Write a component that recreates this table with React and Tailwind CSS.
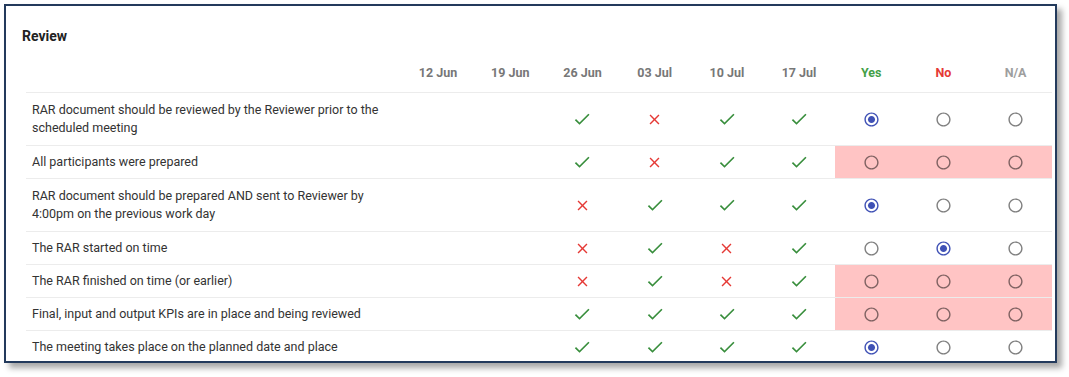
import React from 'react'

const dates = ['12 Jun', '19 Jun', '26 Jun', '03 Jul', '10 Jul', '17 Jul']

// marks: null = empty, true = check, false = cross
const rows = [
  { text: ['RAR document should be reviewed by the Reviewer prior to the', 'scheduled meeting'], marks: [null, null, true, false, true, true], answer: 'yes' },
  { text: ['All participants were prepared'], marks: [null, null, true, false, true, true], answer: null },
  { text: ['RAR document should be prepared AND sent to Reviewer by', '4:00pm on the previous work day'], marks: [null, null, false, true, true, true], answer: 'yes' },
  { text: ['The RAR started on time'], marks: [null, null, false, true, false, true], answer: 'no' },
  { text: ['The RAR finished on time (or earlier)'], marks: [null, null, false, true, false, true], answer: null },
  { text: ['Final, input and output KPIs are in place and being reviewed'], marks: [null, null, true, true, true, true], answer: null },
  { text: ['The meeting takes place on the planned date and place'], marks: [null, null, true, true, true, true], answer: 'yes' },
]

function Check() {
  return (
    <svg width="20" height="20" viewBox="0 0 24 24" className="fill-[#388e3c]">
      <path d="M9 16.17L4.83 12l-1.42 1.41L9 19 21 7l-1.41-1.41z" />
    </svg>
  )
}

function Cross() {
  return (
    <svg width="17" height="17" viewBox="0 0 24 24" className="fill-[#e53935]">
      <path d="M19 6.41L17.59 5 12 10.59 6.41 5 5 6.41 10.59 12 5 17.59 6.41 19 12 13.41 17.59 19 19 17.59 13.41 12z" />
    </svg>
  )
}

function Radio({ checked }) {
  return (
    <svg width="17" height="17" viewBox="0 0 24 24" className={checked ? 'fill-[#3f51b5]' : 'fill-black/50'}>
      <path d="M12 2C6.48 2 2 6.48 2 12s4.48 10 10 10 10-4.48 10-10S17.52 2 12 2zm0 18c-4.42 0-8-3.58-8-8s3.58-8 8-8 8 3.58 8 8-3.58 8-8 8z" />
      {checked && <path d="M12 7c-2.76 0-5 2.24-5 5s2.24 5 5 5 5-2.24 5-5-2.24-5-5-5z" />}
    </svg>
  )
}

export default function App() {
  return (
    <div className="w-[1069px] h-[377px] bg-white pl-1 pt-1 font-['Roboto',sans-serif]">
      <div className="w-[1053px] h-[359px] border-2 border-[#233a5c] bg-white overflow-hidden shadow-[5px_5px_6px_rgba(0,0,0,0.35)]">
        <div className="pl-[16px] pt-[20px] h-[41px] text-[14px] leading-[20px] font-bold text-[#222]">Review</div>

        <div className="ml-[20px] w-[1026px] text-[12.5px] text-[#333]">
          {/* header */}
          <div className="flex h-[46px] items-end pb-[9px] border-b border-[#ececec]">
            <div className="w-[376px]" />
            {dates.map((d) => (
              <div key={d} className="w-[72.2px] text-center font-bold text-[#777]">{d}</div>
            ))}
            <div className="w-[72.2px] text-center font-bold text-[#43a047]">Yes</div>
            <div className="w-[72.2px] text-center font-bold text-[#e53935]">No</div>
            <div className="w-[72.2px] text-center font-bold text-[#9e9e9e]">N/A</div>
          </div>

          {rows.map((r, i) => {
            const pink = r.answer === null
            return (
              <div key={i} className={`flex items-stretch border-b border-[#ececec] ${r.text.length > 1 ? 'h-[53px]' : 'h-[33px]'}`}>
                <div className="w-[376px] pl-[6px] flex flex-col justify-center leading-[18px]">
                  {r.text.map((t, j) => (
                    <div key={j}>{t}</div>
                  ))}
                </div>
                {r.marks.map((m, j) => (
                  <div key={j} className="w-[72.2px] flex items-center justify-center">
                    {m === true && <Check />}
                    {m === false && <Cross />}
                  </div>
                ))}
                <div className={`flex ${pink ? 'bg-[#ffc4c4]' : ''}`}>
                  {['yes', 'no', 'na'].map((a) => (
                    <div key={a} className="w-[72.2px] flex items-center justify-center">
                      <Radio checked={r.answer === a} />
                    </div>
                  ))}
                </div>
              </div>
            )
          })}
        </div>
      </div>
    </div>
  )
}
